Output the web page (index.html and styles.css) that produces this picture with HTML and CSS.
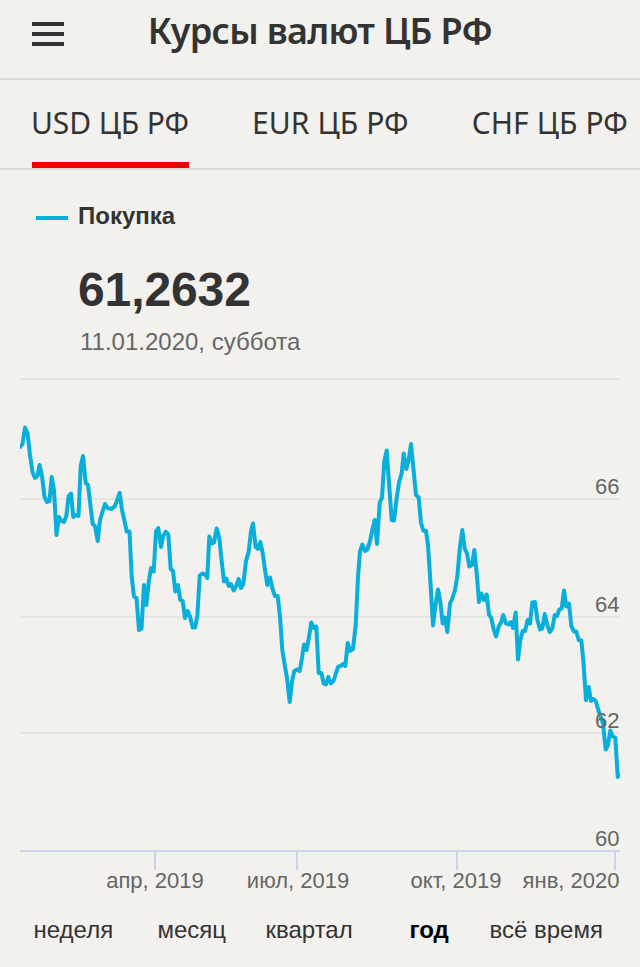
FILE: index.html
```html
<!DOCTYPE html>
<html lang="ru">
<head>
<meta charset="UTF-8">
<meta name="viewport" content="width=device-width, initial-scale=1.0">
<title>Курсы валют ЦБ РФ</title>
<link rel="stylesheet" href="styles.css">
</head>
<body>
<header class="header">
    <button class="menu-button" aria-label="Меню">
        <span></span>
        <span></span>
        <span></span>
    </button>
    <h1>Курсы валют ЦБ РФ</h1>
</header>

<nav class="tabs">
    <a class="tab active">USD ЦБ РФ</a>
    <a class="tab">EUR ЦБ РФ</a>
    <a class="tab">CHF ЦБ РФ</a>
</nav>

<main>
    <div class="summary">
        <div class="legend"><span class="legend-line"></span>Покупка</div>
        <div class="rate">61,2632</div>
        <div class="date">11.01.2020, суббота</div>
    </div>

    <svg class="chart" width="600" height="530" viewBox="20 370 600 530">
        <path class="grid-line" d="M20 379H620M20 499H620M20 617H620M20 733H620"/>
        <path class="axis" d="M20 851H620M155 851V870M297 851V870M457 851V870M615 851V870"/>
        <polyline class="line" points="20,447 22.5,444 25,427.5 27.5,433 30,455 32.5,472 35,478 37.5,476 39.5,465 42,476
            44.5,497 47,502 49.5,501 51.7,477 54,490 56.5,535 59,517 61.5,521 64,522 66.3,516 68.7,496 71,493.5
            73.3,517 76,515 78.5,516 80.7,466 83,456 85.7,483 88,485 90.5,506 92.7,524 95,526 97.7,541 100,520
            102.5,512 105,504 107.5,508 111.5,509 115,506 119.7,493 122,510 124.5,521 126.7,531.5 129.5,531.5
            131.7,577 134,596.5 136.5,598 139,630 141.5,629 144,585 146.3,605 149,580 151,568 153.7,571.5
            156,531.5 158.3,528 161,547 163.3,535.7 165.7,531.7 168.3,534.5 170.7,569 173,571 175.3,591.5
            178,585 180.3,600 182.7,601 185,618 187.7,611 190,616.5 192.7,627.5 195,627.5 197.3,616.5
            199.7,575.5 202.3,573.5 205,574.5 207.3,578 209.3,536.5 211.7,543.5 214,542.5 216.7,528.5
            219.3,538 221.7,561.5 224,581.5 226.3,578.5 228.7,586 231,584 233.7,590.5 236,586.5 238.7,579
            241,588 243.3,584 246,561 248.7,551.5 251,531.5 253,523.5 255.7,547 258,549 260.3,542 262.7,553
            265,570 267.3,585 270,577.5 272.3,588 275,596 277.7,596 280,616.5 282.3,650 284.7,665 287,678
            289.7,702 292,681.5 294.3,671 297,669.5 299.7,671 302,658 304,644.5 306.7,650 309,637 311.3,622.5
            314,628 316.3,626.5 318.7,673 321.3,673 323.7,683.5 326,684.5 328.3,677 331,683.5 333.7,680.5
            336,673 338.3,666.5 340.7,666 343,664 345.3,666 347.7,643 350.3,651 353,649 355.7,625 358,576.5
            360,551.5 362.3,544.5 365,551 367.3,549.5 370,541.5 372.3,530 374.7,520 377,544 379.7,503
            382,497.5 384.3,461.5 386.7,450.5 389,483 391.7,520 394,520.5 396.7,498 399,482.5 401.7,473
            403.7,453.5 406.3,469 408.7,460 411,444 413.7,471.5 416,495 418.7,497.5 421,523 423.3,530.5
            426,531 428,545 430.7,586.5 433,625.5 435.3,606.5 438,589.5 440.3,601.5 442.7,623.5 445,617.5
            447.3,632 450,603.5 452.3,598.5 455,590 457.3,576.5 460,546.5 462.3,530 464.7,548.5 467,553.5
            469.3,566.5 472,565 474.3,550 476.7,573.5 479,602 481.3,593.5 484,600 486.7,594.5 489,614.5
            491.3,618 493.7,629.5 496,636.5 498.7,626.5 501,622.5 503.3,615 506,623.5 508.3,624.5 511,622
            513,628 515.7,612.5 518,659.5 520.3,640 522.7,631 525,631 527.7,620 530,623.5 532.3,602.5
            535,602 537.3,619.5 540,629.5 542.3,628.5 544.7,614 547.3,625 549.7,632 552.3,628.5 554.7,615
            557,616 559.3,609.5 561.7,608.5 564,590.5 566.3,606.5 569,603.5 571.3,626 574,631.5 576.3,631.5
            578.7,640 581.3,640.5 583.3,660 586,700 588.7,687 591,701 593.3,699 595.7,701 598.3,710
            600.7,716.5 603,723.5 605.7,749.5 608,745 610.3,730.5 612.7,736.5 615.3,737.5 617.7,777 619,775"/>
        <g class="labels" text-anchor="end">
            <text x="619.5" y="494">66</text>
            <text x="619.5" y="612">64</text>
            <text x="619.5" y="728">62</text>
            <text x="619.5" y="846">60</text>
            <text x="619.5" y="888">янв, 2020</text>
        </g>
        <g class="labels" text-anchor="middle">
            <text x="155" y="888">апр, 2019</text>
            <text x="298" y="888">июл, 2019</text>
            <text x="456" y="888">окт, 2019</text>
        </g>
    </svg>

    <div class="periods">
        <a>неделя</a>
        <a>месяц</a>
        <a>квартал</a>
        <a class="current">год</a>
        <a>всё время</a>
    </div>
</main>
</body>
</html>
```

FILE: styles.css
```css
body {
    margin: 0;
    background-color: #f2f1ed;
    color: #333;
    font-family: "Liberation Sans", Arial, sans-serif;
    overflow: hidden;
}

.header {
    display: grid;
    grid-template-columns: 32px 1fr 32px;
    height: 78px;
    padding: 0 32px;
    border-bottom: 2px solid #dcdbd8;
}

.menu-button {
    display: flex;
    flex-direction: column;
    gap: 6px;
    padding: 22px 0 0;
    border: none;
    background: none;
}

.menu-button span {
    width: 32px;
    height: 4px;
    background-color: #333;
}

h1 {
    margin: 0;
    font: 600 36px/62px "Noto Sans", sans-serif;
    letter-spacing: -0.7px;
    text-align: center;
    white-space: nowrap;
}

.tabs {
    display: flex;
    gap: 64px;
    height: 88px;
    padding-left: 32px;
    border-bottom: 2px solid #dcdbd8;
}

.tab {
    box-sizing: border-box;
    height: 88px;
    font: 400 30px/86px "Noto Sans", sans-serif;
    letter-spacing: 0.1px;
    text-indent: -1px;
    white-space: nowrap;
}

.tab.active {
    border-bottom: 6px solid #f00000;
    letter-spacing: -0.1px;
}

.summary {
    height: 200px;
    padding-left: 78px;
}

.legend {
    display: flex;
    align-items: center;
    margin-left: -42px;
    padding-top: 32px;
    font-size: 24px;
    font-weight: bold;
    line-height: 28px;
}

.legend-line {
    width: 32px;
    height: 4px;
    margin: 3px 10px 0 0;
    background-color: #08afda;
}

.rate {
    margin-top: 32px;
    font-size: 48px;
    font-weight: bold;
    letter-spacing: -0.1px;
    line-height: 56px;
}

.date {
    margin: 10px 0 0 2px;
    color: #666;
    font-size: 24px;
    line-height: 28px;
}

.chart {
    display: block;
    margin-left: 20px;
}

.grid-line {
    stroke: #e5e4e5;
    stroke-width: 2;
}

.axis {
    fill: none;
    stroke: #c7d4ec;
    stroke-width: 2;
}

.line {
    fill: none;
    stroke: #08afda;
    stroke-width: 4;
    stroke-linejoin: round;
    stroke-linecap: round;
}

.labels {
    fill: #666;
    font-size: 22px;
}

.periods {
    display: grid;
    grid-template-columns: 124px 108px 144px 80px auto;
    padding: 16px 0 0 33.5px;
    font-size: 24px;
    line-height: 28px;
    white-space: nowrap;
}

.periods .current {
    color: #000;
    font-weight: bold;
}
```
